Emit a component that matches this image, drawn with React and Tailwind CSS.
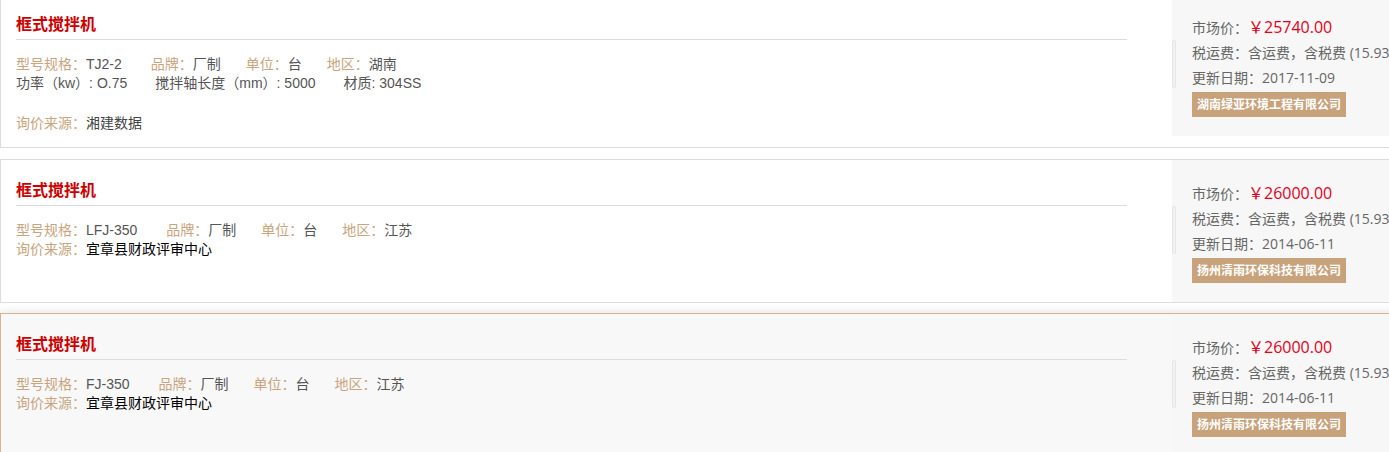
const items = [
  {
    title: '框式搅拌机',
    specs: [
      ['型号规格', 'TJ2-2'],
      ['品牌', '厂制'],
      ['单位', '台'],
      ['地区', '湖南'],
    ],
    extra: ['功率（kw）: O.75', '搅拌轴长度（mm）: 5000', '材质: 304SS'],
    source: '湘建数据',
    sourceDark: false,
    price: '25740.00',
    date: '2017-11-09',
    company: '湖南绿亚环境工程有限公司',
  },
  {
    title: '框式搅拌机',
    specs: [
      ['型号规格', 'LFJ-350'],
      ['品牌', '厂制'],
      ['单位', '台'],
      ['地区', '江苏'],
    ],
    source: '宜章县财政评审中心',
    sourceDark: true,
    price: '26000.00',
    date: '2014-06-11',
    company: '扬州清雨环保科技有限公司',
  },
  {
    title: '框式搅拌机',
    specs: [
      ['型号规格', 'FJ-350'],
      ['品牌', '厂制'],
      ['单位', '台'],
      ['地区', '江苏'],
    ],
    source: '宜章县财政评审中心',
    sourceDark: true,
    price: '26000.00',
    date: '2014-06-11',
    company: '扬州清雨环保科技有限公司',
    active: true,
  },
]

function Card({ item, className }) {
  return (
    <div
      className={
        'flex w-[1440px] border ' +
        (item.active
          ? 'border-[#d9b48e] bg-[#f8f8f8] shadow-[0_0_10px_rgba(0,0,0,0.13)] '
          : 'border-[#dddddd] bg-white ') +
        className
      }
    >
      {/* left: title and specs */}
      <div
        className="w-[1171px] shrink-0 pl-[15px] pr-[45px] pb-[14px]"
        style={{ fontFamily: '"Liberation Sans", "Noto Sans CJK SC", sans-serif' }}
      >
        <div className="pt-[19px] pb-[2px] border-b border-[#dddddd]">
          <h3 className="text-[16px] leading-[24px] font-bold text-[#cc0000]">{item.title}</h3>
        </div>
        <div className="mt-[15px] text-[14px] leading-[19px]">
          <div className="flex">
            {item.specs.map(([k, v], i) => (
              <span key={k} className={i === 0 ? 'mr-[29px]' : 'mr-[25px]'}>
                <span className="text-[#c9a47e]">{k}：</span>
                <span className="text-[#555555]">{v}</span>
              </span>
            ))}
          </div>
          {item.extra && (
            <>
              <div className="flex text-[#555555]">
                {item.extra.map(t => (
                  <span key={t} className="mr-[28px]">{t}</span>
                ))}
              </div>
              <div className="h-[21px]" />
            </>
          )}
          <div>
            <span className="text-[#c9a47e]">询价来源：</span>
            <span className={item.sourceDark ? 'text-black' : 'text-[#444444]'}>{item.source}</span>
          </div>
        </div>
      </div>

      {/* right: price box */}
      <div className="relative h-[142px] flex-1 bg-[#f7f7f7] pl-[20px] pt-[21px] text-[14px] leading-[25px] text-[#666666]">
        <div className="absolute left-0 top-[46px] h-[48px] w-[4px] rounded-[2px] border border-[#e6e6e6] bg-[#f2f2f2]" />
        <div>
          市场价：<span className="text-[16px] text-[#e4001b]">￥{item.price}</span>
        </div>
        <div className="whitespace-nowrap">税运费：含运费，含税费 (15.93%)</div>
        <div>更新日期：{item.date}</div>
        <div className="mt-[2px] inline-block bg-[#c8a27a] px-[5px] text-[12px] font-bold leading-[25px] text-white">
          {item.company}
        </div>
      </div>
    </div>
  )
}

export default function App() {
  return (
    <div
      className="h-[452px] w-[1389px] overflow-hidden bg-white"
      style={{ fontFamily: '"Open Sans", "Noto Sans CJK SC", sans-serif' }}
    >
      <div className="-mt-[7px]">
        <Card item={items[0]} className="mb-[11px]" />
        <Card item={items[1]} className="mb-[10px]" />
        <Card item={items[2]} className="" />
      </div>
    </div>
  )
}
